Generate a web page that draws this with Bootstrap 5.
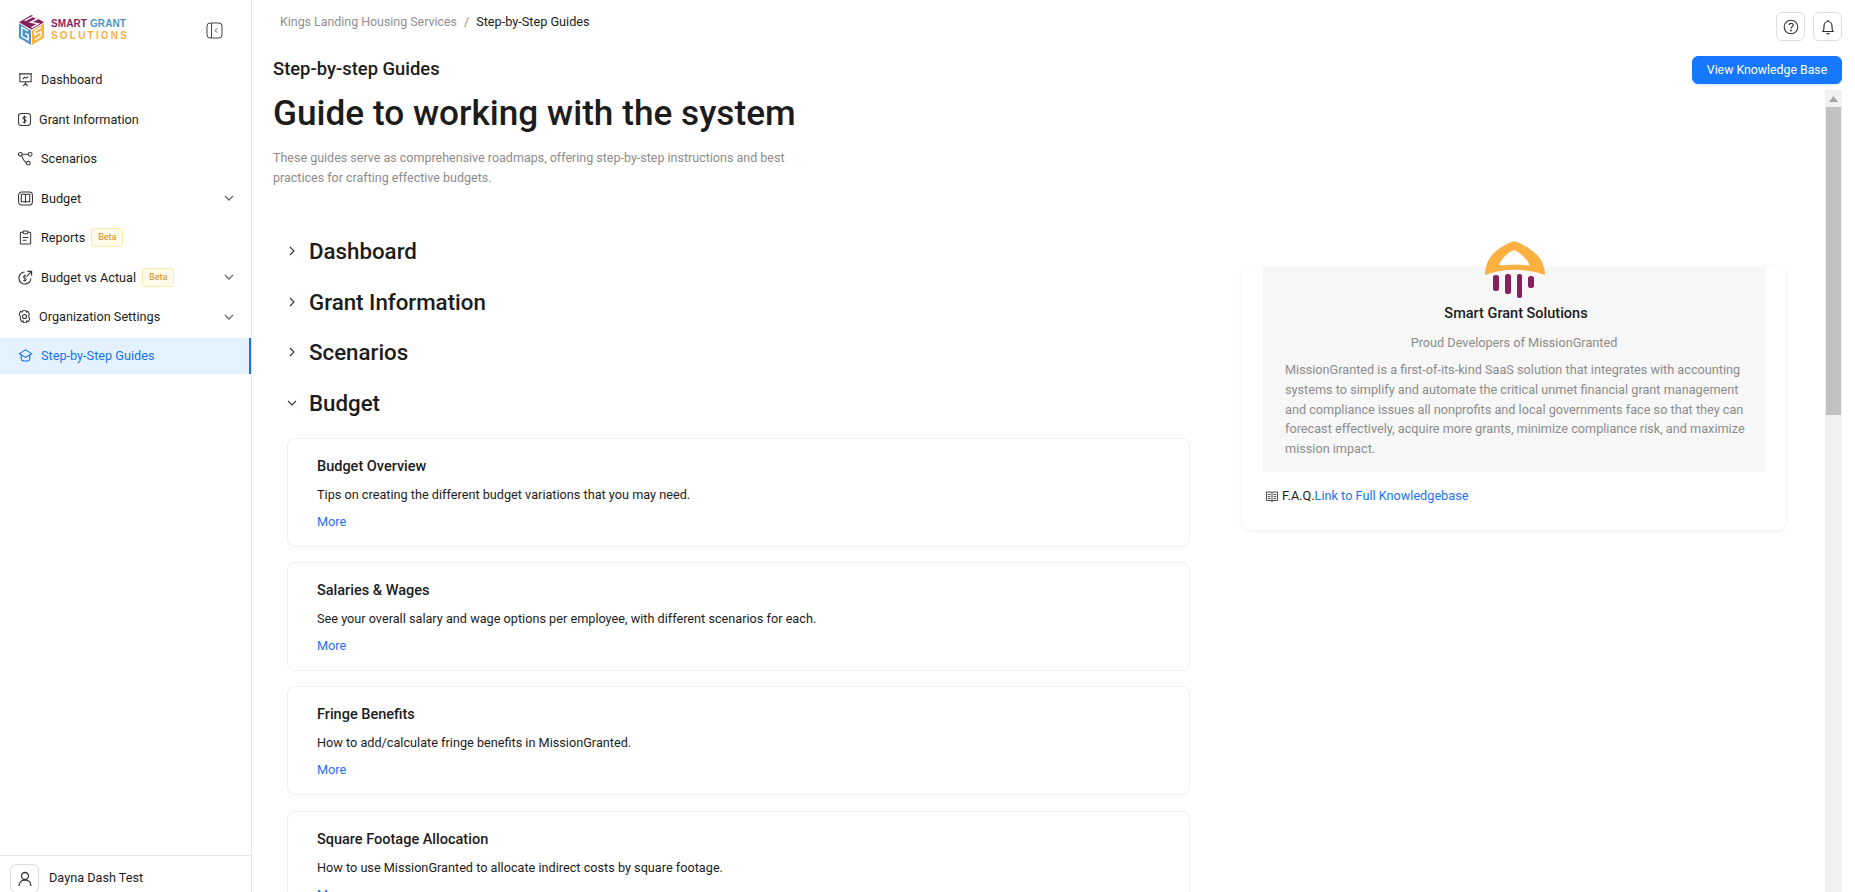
<!DOCTYPE html>
<html lang="en">

<head>
    <meta charset="UTF-8">
    <meta name="viewport" content="width=device-width, initial-scale=1.0">
    <title>Step-by-Step Guides</title>
    <link href="https://cdn.jsdelivr.net/npm/bootstrap@5.3.0/dist/css/bootstrap.min.css" rel="stylesheet">
    <style>
        html, body { height: 100%; overflow: hidden; }
        body { font-family: Roboto, "Noto Sans", sans-serif; font-size: 12.700px; color: #1c1c1c; background: #fff; }
        a { text-decoration: none; color: #1a73f5; }
        svg { display: block; flex: none; }

        /* sidebar */
        .side-bar { width: 252px; height: 892px; border-right: 1px solid #e6e6e6; flex: none; }
        .logo-row { height: 60px; padding: 0 18px; }
        .logo-words { font-family: "Liberation Sans", sans-serif; font-weight: 700; line-height: 12px; margin-left: 6px; }
        .logo-top { font-size: 10px; letter-spacing: .1px; color: #8a1f5e; }
        .logo-top span { color: #4f94c9; }
        .logo-bot { font-size: 10px; letter-spacing: 2.200px; color: #fbb040; }
        .side-link { height: 39.500px; padding: 0 17px 0 18px; color: #1c1c1c; gap: 8px; }
        .side-link.now { background: #e3f2fe; color: #1a73f5; border-right: 2px solid #1a73f5; height: 36px; margin-top: 1px; }
        .beta-tag { font-size: 9px; line-height: 17px; height: 19px; padding: 0 6px; margin-left: -2px; color: #d08a1d; background: #fffbe8; border: 1px solid #fde9a8; border-radius: 3px; }
        .chev-end { margin-left: auto; }
        .user-row { height: 37px; border-top: 1px solid #e6e6e6; padding: 8px 10px 0; gap: 10px; }
        .square-btn { width: 29px; height: 29px; border: 1px solid #dedede; border-radius: 6px; background: #fff; }
        .user-slot { margin-top: auto; height: 37px; overflow: hidden; }

        /* main */
        .top-bar { height: 56px; padding: 12px 13px 0 28px; line-height: 20px; }
        .crumb-a { color: #8f8f8f; font-size: 12.400px; }
        .crumb-sep { color: #8f8f8f; margin: 0 7px; }
        .head-row { padding: 0 13px 0 21px; height: 34px; }
        .sub-head { font-size: 18.400px; font-weight: 500; line-height: 24px; margin-top: 1px; }
        .kb-btn { font-size: 12.300px; height: 28px; width: 150px; padding: 1px 0 0; border-radius: 6px; background: #1677ff; border-color: #1677ff; box-shadow: 0 2px 0 rgba(5,145,255,.1); }
        .scroll-box { height: 802px; overflow: hidden; }
        .page-col { padding-left: 21px; min-width: 0; }
        .big-title { font-size: 35.200px; font-weight: 500; line-height: 48px; margin: -1px 0 0; }
        .intro-txt { color: #8c8c8c; font-size: 12.500px; line-height: 20px; width: 540px; margin: 11px 0 0; }
        .guide-col { width: 903px; margin: 38px 0 0 14px; flex: none; }
        .acc-head { height: 50.500px; font-size: 22.300px; font-weight: 500; line-height: 30px; }
        .acc-arrow { width: 22px; }
        .guide-list { padding-top: 10px; }
        .guide-card { border: 1px solid #f0f0f0; border-radius: 8px; height: 109px; padding: 18px 29px 0; margin-bottom: 15.200px; }
        .guide-card h6 { font-size: 14.500px; font-weight: 500; line-height: 20px; margin: 0; }
        .guide-card p { line-height: 20px; margin: 8px 0 0; }
        .guide-card a { display: block; line-height: 20px; margin-top: 7px; }
        .about-col { width: 544px; margin: 79px 0 0 52px; flex: none; }
        .about-card { height: 263px; border-radius: 8px; box-shadow: 0 1px 4px rgba(0,0,0,.08); padding: 0 21px; }
        .about-panel { background: #f7f7f7; height: 205px; text-align: center; padding: 0 18px 0 22px; position: relative; }
        .about-logo { position: absolute; left: 222px; top: -26px; }
        .about-panel h5 { font-size: 14.500px; font-weight: 500; line-height: 20px; margin: 0; padding-top: 37px; }
        .about-sub { color: #8c8c8c; line-height: 20px; margin: 9px 0 0 -4px; }
        .about-txt { color: #8c8c8c; line-height: 19.800px; margin: 7px 0 0; text-align: left; }
        .faq-row { padding: 14px 3px 0; line-height: 20px; gap: 4px; }

        /* drawn scrollbar */
        .fake-scroll { width: 17px; height: 802px; background: #f1f1f1; margin-right: 13px; flex: none; }
        .fake-arrow { height: 17px; }
        .fake-thumb { height: 308px; background: #c1c1c1; margin: 0 1px; }
    </style>
</head>

<body>
    <div class="d-flex">
        <!--Menu lateral-->
        <aside class="side-bar d-flex flex-column">
            <div class="logo-row d-flex align-items-center">
                <svg width="27" height="30" viewBox="0 0 28 31">
                    <path d="M14 0 27 7.500 14 15 1 7.500Z" fill="#8a1f5e" />
                    <path d="M1 8.500 13.500 16V31L1 23.500Z" fill="#4f94c9" />
                    <path d="M27 8.500 14.500 16V31L27 23.500Z" fill="#fbb040" />
                    <path d="M7 6 15.500 1.500 20 4 13 7.500 21 9 14 13" stroke="#fff" stroke-width="1.400" fill="none" />
                    <path d="M10.500 16.500 4 12.800V22l6.500 3.700v-5L7.500 19" stroke="#fff" stroke-width="1.500" fill="none" />
                    <path d="M24 12.500 17.500 16.500V20.500L24 17V21.500L17.500 25.500" stroke="#fff" stroke-width="1.500" fill="none" />
                </svg>
                <div class="logo-words">
                    <div class="logo-top">SMART <span>GRANT</span></div>
                    <div class="logo-bot">SOLUTIONS</div>
                </div>
                <svg class="ms-auto" style="margin-right:10px" width="17" height="17" viewBox="0 0 17 17" fill="none" stroke="#444" stroke-width="1">
                    <rect x="1" y="1" width="15" height="15" rx="3" />
                    <path d="M5.500 1V16" />
                    <path d="M11 6.500 9 8.500 11 10.500" />
                </svg>
            </div>
            <nav class="d-flex flex-column">
                <a class="side-link d-flex align-items-center" href="#">
                    <svg width="15" height="15" viewBox="0 0 16 16" fill="none" stroke="#333" stroke-width="1.100"><path d="M1 2h14M2 2v8.500h12V2M8 10.500V12M5.500 15 8 12l2.500 3M5 7.500l2-2 1.500 1L11 5" /></svg>
                    <span>Dashboard</span>
                </a>
                <a class="side-link d-flex align-items-center" href="#">
                    <svg width="13" height="13" viewBox="0 0 14 14" fill="none" stroke="#333" stroke-width="1.100"><rect x=".6" y=".6" width="12.800" height="12.800" rx="3" /><path d="M9 4.700C8.500 4 6 3.700 5.500 5S6.300 6.800 7 7s2 .8 1.500 2-3 1-3.500.300M7 2.800v8.400" /></svg>
                    <span>Grant Information</span>
                </a>
                <a class="side-link d-flex align-items-center" href="#">
                    <svg width="15" height="15" viewBox="0 0 16 16" fill="none" stroke="#333" stroke-width="1.100"><circle cx="2.500" cy="3.500" r="2" /><circle cx="13" cy="3.500" r="2" /><circle cx="11" cy="13" r="2" /><path d="M4.500 3.500h6.500M4 5c1 2.500 2 6 5 7.500" /></svg>
                    <span>Scenarios</span>
                </a>
                <a class="side-link d-flex align-items-center" href="#">
                    <svg width="15" height="15" viewBox="0 0 16 16" fill="none" stroke="#333" stroke-width="1.100"><rect x=".6" y="1" width="14.800" height="14" rx="3.500" /><path d="M3.500 3.500h3.500a1 1 0 0 1 1 1v8a1 1 0 0 0-1-1H3.500ZM12.500 3.500H9a1 1 0 0 0-1 1v8a1 1 0 0 1 1-1h3.500Z" /></svg>
                    <span>Budget</span>
                    <svg class="chev-end" width="10" height="10" viewBox="0 0 10 10" fill="none" stroke="#666" stroke-width="1.300"><path d="M1 3l4 4 4-4" /></svg>
                </a>
                <a class="side-link d-flex align-items-center" href="#">
                    <svg width="15" height="15" viewBox="0 0 16 16" fill="none" stroke="#333" stroke-width="1.100"><path d="M5.500 2.500H3.500a1 1 0 0 0-1 1V14a1 1 0 0 0 1 1h9a1 1 0 0 0 1-1V3.500a1 1 0 0 0-1-1h-2" /><rect x="5.500" y="1" width="5" height="3" rx="1" /><path d="M5 8h6M5 11h4" /></svg>
                    <span>Reports</span>
                    <span class="beta-tag">Beta</span>
                </a>
                <a class="side-link d-flex align-items-center" href="#">
                    <svg width="15" height="15" viewBox="0 0 16 16" fill="none" stroke="#333" stroke-width="1.200"><path d="M13.800 9A6.400 6.400 0 1 1 7 2.200M10 1.500h4.500V6M14.500 1.500 9.500 6.500" /><path d="M9 6.800C8.500 6 5.500 6 5.500 7.600S9 8.600 9 10.200s-3 1.600-3.500.8M7.300 4.800v7.400" stroke-width="1" /></svg>
                    <span>Budget vs Actual</span>
                    <span class="beta-tag">Beta</span>
                    <svg class="chev-end" width="10" height="10" viewBox="0 0 10 10" fill="none" stroke="#666" stroke-width="1.300"><path d="M1 3l4 4 4-4" /></svg>
                </a>
                <a class="side-link d-flex align-items-center" href="#">
                    <svg width="13" height="13" viewBox="0 0 14 14" fill="none" stroke="#333" stroke-width="1.100"><path d="M5.500.3h3l.5 1.900 1.700-.6 1.500 2.700L11.400 7l1.300 2.700-1.500 2.700-1.700-.6-.5 1.900h-3l-.5-1.900-1.700.6-1.500-2.700L2.600 7 1.300 4.300l1.500-2.700 1.700.6Z" /><circle cx="7" cy="7" r="2.200" /></svg>
                    <span>Organization Settings</span>
                    <svg class="chev-end" width="10" height="10" viewBox="0 0 10 10" fill="none" stroke="#666" stroke-width="1.300"><path d="M1 3l4 4 4-4" /></svg>
                </a>
                <a class="side-link now d-flex align-items-center" href="#">
                    <svg width="15" height="15" viewBox="0 0 16 16" fill="none" stroke="#1a73f5" stroke-width="1.200"><path d="M8 2 1.500 6 8 10l6.500-4ZM3.500 7.500V12c0 2.500 9 2.500 9 0V7.500" /></svg>
                    <span>Step-by-Step Guides</span>
                </a>
            </nav>
            <div class="user-slot">
                <div class="user-row d-flex align-items-start">
                    <span class="square-btn d-flex align-items-center justify-content-center">
                        <svg width="16" height="16" viewBox="0 0 16 16" fill="none" stroke="#333" stroke-width="1.300"><circle cx="8" cy="5" r="3.500" /><path d="M2 15c0-3.500 2.500-6 6-6s6 2.500 6 6" /></svg>
                    </span>
                    <span class="mt-1">Dayna Dash Test</span>
                </div>
            </div>
        </aside>

        <!--Area principal-->
        <main class="flex-grow-1" style="min-width:0">
            <div class="top-bar d-flex align-items-start">
                <span class="crumb-a">Kings Landing Housing Services</span>
                <span class="crumb-sep">/</span>
                <span>Step-by-Step Guides</span>
                <span class="square-btn d-flex align-items-center justify-content-center ms-auto">
                    <svg width="16" height="16" viewBox="0 0 16 16" fill="none" stroke="#333" stroke-width="1.100"><circle cx="8" cy="8" r="6.800" /><path d="M6 6.300c0-2.600 4.200-2.600 4.200-.1 0 1.600-2.200 1.500-2.200 3.200" /><circle cx="8" cy="11.500" r=".4" /></svg>
                </span>
                <span class="square-btn d-flex align-items-center justify-content-center ms-2">
                    <svg width="16" height="16" viewBox="0 0 16 16" fill="none" stroke="#333" stroke-width="1.200"><path d="M3 12.500c1-1 1-2 1-5.500 0-2.500 1.700-4.500 4-4.500S12 4.500 12 7c0 3.500 0 4.500 1 5.500ZM6.500 14.700h3M8 1v1.500" /></svg>
                </span>
            </div>
            <div class="head-row d-flex justify-content-between align-items-start">
                <div class="sub-head">Step-by-step Guides</div>
                <button class="btn btn-primary kb-btn">View Knowledge Base</button>
            </div>
            <div class="d-flex">
                <div class="scroll-box flex-grow-1">
                    <div class="page-col">
                        <h1 class="big-title">Guide to working with the system</h1>
                        <p class="intro-txt">These guides serve as comprehensive roadmaps, offering step-by-step instructions and best practices for crafting effective budgets.</p>
                        <div class="d-flex">
                            <div class="guide-col">
                                <div class="acc-head d-flex align-items-center"><span class="acc-arrow"><svg width="10" height="10" viewBox="0 0 10 10" fill="none" stroke="#333" stroke-width="1.100"><path d="M3 1l4 4-4 4" /></svg></span>Dashboard</div>
                                <div class="acc-head d-flex align-items-center"><span class="acc-arrow"><svg width="10" height="10" viewBox="0 0 10 10" fill="none" stroke="#333" stroke-width="1.100"><path d="M3 1l4 4-4 4" /></svg></span>Grant Information</div>
                                <div class="acc-head d-flex align-items-center"><span class="acc-arrow"><svg width="10" height="10" viewBox="0 0 10 10" fill="none" stroke="#333" stroke-width="1.100"><path d="M3 1l4 4-4 4" /></svg></span>Scenarios</div>
                                <div class="acc-head d-flex align-items-center"><span class="acc-arrow"><svg width="10" height="10" viewBox="0 0 10 10" fill="none" stroke="#333" stroke-width="1.100"><path d="M1 3l4 4 4-4" /></svg></span>Budget</div>
                                <div class="guide-list">
                                    <div class="guide-card">
                                        <h6>Budget Overview</h6>
                                        <p>Tips on creating the different budget variations that you may need.</p>
                                        <a href="#">More</a>
                                    </div>
                                    <div class="guide-card">
                                        <h6>Salaries &amp; Wages</h6>
                                        <p>See your overall salary and wage options per employee, with different scenarios for each.</p>
                                        <a href="#">More</a>
                                    </div>
                                    <div class="guide-card">
                                        <h6>Fringe Benefits</h6>
                                        <p>How to add/calculate fringe benefits in MissionGranted.</p>
                                        <a href="#">More</a>
                                    </div>
                                    <div class="guide-card">
                                        <h6>Square Footage Allocation</h6>
                                        <p>How to use MissionGranted to allocate indirect costs by square footage.</p>
                                        <a href="#">More</a>
                                    </div>
                                </div>
                            </div>
                            <div class="about-col">
                                <div class="about-card">
                                    <div class="about-panel">
                                        <svg class="about-logo" width="60" height="57" viewBox="0 0 60 57">
                                            <path fill-rule="evenodd" d="M29 0C45 6 60 16 60 34C42 27 18 27 0 34C0 16 13 6 29 0ZM29 9C22 12 16 18 14 24.500C24 23.500 34 23.500 45 24.500C42 18 36 12 29 9Z" fill="#fbb040" />
                                            <rect x="8" y="34" width="6" height="16" rx="2.500" fill="#8a1f5e" />
                                            <rect x="20" y="33" width="6" height="20" rx="2.500" fill="#8a1f5e" />
                                            <rect x="32" y="33" width="5" height="24" rx="2" fill="#8a1f5e" />
                                            <rect x="43" y="35" width="6" height="12" rx="2.500" fill="#8a1f5e" />
                                        </svg>
                                        <h5>Smart Grant Solutions</h5>
                                        <p class="about-sub">Proud Developers of MissionGranted</p>
                                        <p class="about-txt">MissionGranted is a first-of-its-kind SaaS solution that integrates with accounting systems to simplify and automate the critical unmet financial grant management and compliance issues all nonprofits and local governments face so that they can forecast effectively, acquire more grants, minimize compliance risk, and maximize mission impact.</p>
                                    </div>
                                    <div class="faq-row d-flex align-items-center">
                                        <svg width="12" height="11" viewBox="0 0 12 11" fill="none" stroke="#333" stroke-width=".9"><path d="M.5 1h4.500a1 1 0 0 1 1 1 1 1 0 0 1 1-1h4.500v8.500H7a1 1 0 0 0-1 1 1 1 0 0 0-1-1H.5ZM6 2v8.500M2 3.500h2.500M2 5.500h2.500M2 7.500h2.500M7.500 3.500H10M7.500 5.500H10M7.500 7.500H10" /></svg>
                                        <span>F.A.Q.<a href="#">Link to Full Knowledgebase</a></span>
                                    </div>
                                </div>
                            </div>
                        </div>
                    </div>
                </div>
                <div class="fake-scroll">
                    <div class="fake-arrow d-flex align-items-center justify-content-center">
                        <svg width="9" height="6" viewBox="0 0 9 6"><path d="M4.500 0 9 6H0Z" fill="#a3a3a3" /></svg>
                    </div>
                    <div class="fake-thumb"></div>
                </div>
            </div>
        </main>
    </div>

    <script src="https://cdn.jsdelivr.net/npm/bootstrap@5.3.0/dist/js/bootstrap.bundle.min.js"></script>
</body>

</html>
